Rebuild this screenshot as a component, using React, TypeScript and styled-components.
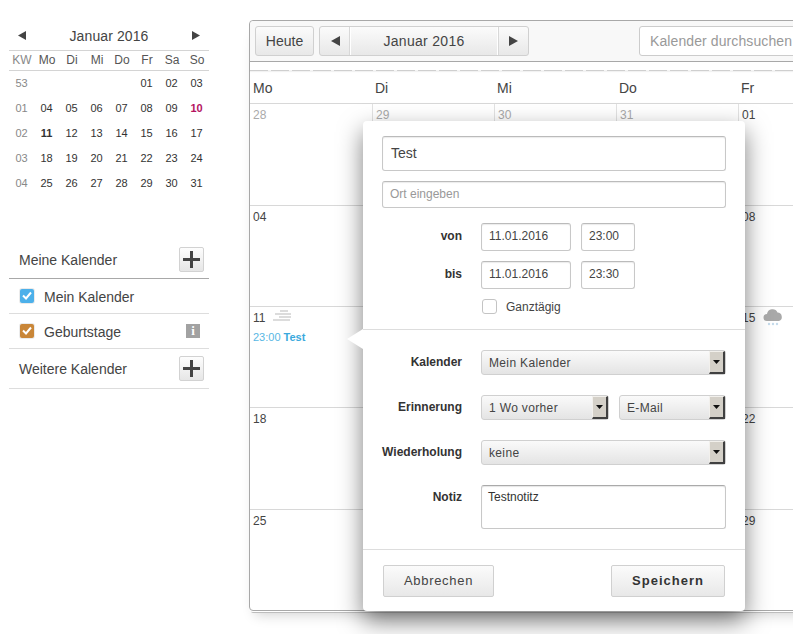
import { Fragment } from "react";
import styled, { createGlobalStyle } from "styled-components";

const GlobalStyle = createGlobalStyle`
  html, body {
    margin: 0;
    padding: 0;
    background: #fff;
  }
  body {
    font-family: "Liberation Sans", Arial, sans-serif;
    color: #333;
  }
`;

const weeks = [
  { kw: "53", days: ["", "", "", "", "01", "02", "03"] },
  { kw: "01", days: ["04", "05", "06", "07", "08", "09", "10"] },
  { kw: "02", days: ["11", "12", "13", "14", "15", "16", "17"] },
  { kw: "03", days: ["18", "19", "20", "21", "22", "23", "24"] },
  { kw: "04", days: ["25", "26", "27", "28", "29", "30", "31"] },
];

const weekdays = ["Mo", "Di", "Mi", "Do", "Fr", "Sa", "So"];

const monthRows = [
  ["28", "29", "30", "31", "01", "02", "03"],
  ["04", "05", "06", "07", "08", "09", "10"],
  ["11", "12", "13", "14", "15", "16", "17"],
  ["18", "19", "20", "21", "22", "23", "24"],
  ["25", "26", "27", "28", "29", "30", "31"],
];

const Page = styled.div`
  position: relative;
  display: flex;
  align-items: flex-start;
  width: 793px;
  height: 634px;
  overflow: hidden;
  background: #fff;
`;

const Sidebar = styled.aside`
  flex: none;
  width: 200px;
  margin: 24px 40px 0 9px;
`;

const MiniTitle = styled.div`
  display: flex;
  align-items: center;
  justify-content: space-between;
  height: 26px;
  padding: 0 9px 3px;
  font-size: 14px;
  letter-spacing: 0.1px;
  color: #444;
  box-sizing: border-box;
`;

const MiniGrid = styled.div`
  display: grid;
  grid-template-columns: repeat(8, 25px);
`;

const MiniHead = styled.div`
  grid-column: 1 / -1;
  display: grid;
  grid-template-columns: repeat(8, 25px);
  height: 19px;
  border-top: 1px solid #d4d4d4;
  border-bottom: 1px solid #d4d4d4;
`;

const MiniHeadCell = styled.div<{ $muted?: boolean }>`
  padding-left: 1px;
  font-size: 12px;
  line-height: 19px;
  text-align: center;
  color: ${(p) => (p.$muted ? "#888" : "#555")};
`;

const MiniCell = styled.div<{ $tone?: "week" | "today" | "selected" }>`
  height: 25px;
  font-size: 11px;
  line-height: 25px;
  text-align: center;
  color: ${(p) =>
    p.$tone === "week" ? "#888" : p.$tone === "today" ? "#b5135f" : "#333"};
  font-weight: ${(p) => (p.$tone === "today" || p.$tone === "selected" ? 700 : 400)};
`;

const CalendarList = styled.div`
  margin-top: 47px;
`;

const ListHeader = styled.div<{ $tall?: boolean; $strong?: boolean }>`
  display: flex;
  align-items: center;
  justify-content: space-between;
  height: ${(p) => (p.$tall ? 38 : 34)}px;
  padding: ${(p) => (p.$tall ? "1px 5px 0 10px" : "0 5px 1px 10px")};
  font-size: 14px;
  color: #444;
  border-bottom: 1px solid ${(p) => (p.$strong ? "#a8a8a8" : "#ddd")};
`;

const ListRow = styled.div`
  display: flex;
  align-items: center;
  height: 33px;
  padding: 1px 9px 0 11px;
  font-size: 14px;
  color: #444;
  border-bottom: 1px solid #ddd;
`;

const ColorCheck = styled.span<{ $color: string }>`
  flex: none;
  display: flex;
  align-items: center;
  justify-content: center;
  width: 14px;
  height: 14px;
  margin: 0 10px 2px 0;
  border-radius: 2px;
  background: ${(p) => p.$color};
  box-shadow: 0 0 0 1px rgba(0, 0, 0, 0.08);
`;

const RowLabel = styled.span`
  flex: 1;
`;

const InfoBadge = styled.span`
  flex: none;
  width: 14px;
  height: 14px;
  margin-bottom: 1px;
  font-family: "Liberation Serif", serif;
  font-size: 13px;
  font-weight: 700;
  line-height: 14px;
  text-align: center;
  color: #fff;
  background: #a2a2a2;
`;

const AddButton = styled.span`
  display: flex;
  align-items: center;
  justify-content: center;
  width: 23px;
  height: 23px;
  margin-bottom: 2px;
  border: 1px solid #d2d2d2;
  border-radius: 2px;
  background: linear-gradient(#fdfdfd, #e6e6e6);
`;

const Main = styled.main`
  position: relative;
  flex: none;
  display: flex;
  flex-direction: column;
  width: 856px;
  height: 589px;
  margin-top: 20px;
  border: 1px solid #a8a8a8;
  border-radius: 4px;
  box-shadow: 0 1px 0 #fff, 0 4px 0 -2px #bdbdbd, 0 10px 12px -6px rgba(0, 0, 0, 0.18);
  background: #fff;
`;

const Toolbar = styled.div`
  flex: none;
  display: flex;
  align-items: center;
  box-sizing: border-box;
  height: 41px;
  padding: 0 5px;
  background: #f8f8f8;
  border-bottom: 1px solid #a8a8a8;
  border-radius: 4px 4px 0 0;
`;

const ToolButton = styled.div`
  box-sizing: border-box;
  width: 59px;
  height: 30px;
  font-size: 14px;
  line-height: 28px;
  text-align: center;
  color: #444;
  border: 1px solid #d0d0d0;
  border-radius: 3px;
  background: linear-gradient(#fbfbfb, #e8e8e8);
`;

const NavGroup = styled.div`
  display: flex;
  height: 30px;
  margin: 0 110px 0 5px;
  box-sizing: border-box;
  border: 1px solid #d0d0d0;
  border-radius: 3px;
  background: linear-gradient(#fbfbfb, #e8e8e8);
`;

const NavArrow = styled.div`
  display: flex;
  align-items: center;
  justify-content: center;
  width: 30px;
`;

const NavLabel = styled.div`
  width: 146px;
  font-size: 14px;
  letter-spacing: 0.3px;
  line-height: 28px;
  text-align: center;
  color: #444;
  border-left: 1px solid #fff;
  border-right: 1px solid #fff;
  box-shadow: -1px 0 0 #d8d8d8, 1px 0 0 #d8d8d8;
`;

const SearchBox = styled.div`
  box-sizing: border-box;
  width: 300px;
  height: 30px;
  padding-left: 10px;
  font-size: 14px;
  letter-spacing: 0.1px;
  line-height: 28px;
  color: #999;
  background: #fff;
  border: 1px solid #ccc;
  border-radius: 3px;
`;

const TornEdge = styled.div`
  flex: none;
  height: 9px;
  box-sizing: border-box;
  background: repeating-linear-gradient(90deg, #cfcfcf 0 18px, #f4f4f4 18px 21px) left bottom / 100% 1px no-repeat;
  box-shadow: 0 1px 1px rgba(0, 0, 0, 0.05);
`;

const DayHeader = styled.div`
  flex: none;
  display: grid;
  grid-template-columns: repeat(7, 122px);
  height: 33px;
  box-sizing: border-box;
  border-bottom: 1px solid #d8d8d8;
`;

const DayName = styled.div`
  padding: 9px 0 0 3px;
  font-size: 14px;
  line-height: 16px;
  color: #444;
`;

const MonthGrid = styled.div`
  flex: 1;
  display: grid;
  grid-template-columns: repeat(7, 122px);
  grid-template-rows: 102px 101px 101px 102px 1fr;
`;

const DayCell = styled.div<{ $first: boolean; $last: boolean }>`
  box-sizing: border-box;
  padding: 4px 0 0 3px;
  border-left: ${(p) => (p.$first ? "none" : "1px solid #e2e2e2")};
  border-bottom: ${(p) => (p.$last ? "none" : "1px solid #d8d8d8")};
`;

const DayTop = styled.div`
  display: flex;
  align-items: center;
  gap: 8px;
  height: 14px;
`;

const DayNumber = styled.span<{ $muted: boolean }>`
  font-size: 12px;
  line-height: 14px;
  color: ${(p) => (p.$muted ? "#aaa" : "#444")};
`;

const WeatherSlot = styled.span`
  display: flex;
  margin-top: -3px;
`;

const EventLine = styled.div`
  margin-top: 5px;
  font-size: 11px;
  line-height: 14px;
  color: #58b7e4;
`;

const EventTitle = styled.b`
  margin-left: 3px;
  color: #3aa9dd;
`;

const Popup = styled.div`
  position: absolute;
  left: 113px;
  top: 100px;
  width: 382px;
  height: 490px;
  background: #fff;
  border-radius: 4px;
  box-shadow: 0 10px 24px rgba(0, 0, 0, 0.5);
`;

const PopupArrow = styled.div`
  position: absolute;
  left: -16px;
  top: 208px;
  width: 0;
  height: 0;
  border-top: 10px solid transparent;
  border-bottom: 10px solid transparent;
  border-right: 16px solid #fff;
`;

const TopSection = styled.section`
  box-sizing: border-box;
  height: 209px;
  padding: 15px 19px 0;
  border-bottom: 1px solid #ddd;
`;

const MiddleSection = styled.section`
  display: flex;
  flex-direction: column;
  gap: 20px;
  box-sizing: border-box;
  height: 220px;
  padding: 20px 19px 0;
  border-bottom: 1px solid #ddd;
`;

const FooterSection = styled.footer`
  display: flex;
  justify-content: space-between;
  padding: 15px 20px 0;
`;

const Field = styled.div<{ $height: number; $width?: number; $size: number; $color?: string }>`
  box-sizing: border-box;
  flex: none;
  width: ${(p) => (p.$width ? `${p.$width}px` : "100%")};
  height: ${(p) => p.$height}px;
  padding: 0 ${(p) => (p.$size > 12 ? 8 : 7)}px;
  font-size: ${(p) => p.$size}px;
  line-height: ${(p) => p.$height - 3}px;
  color: ${(p) => p.$color ?? "#444"};
  background: #fff;
  border: 1px solid #c8c8c8;
  border-top-color: #bbb;
  border-radius: 3px;
  box-shadow: inset 0 1px 1px rgba(0, 0, 0, 0.08);
`;

const TitleGap = styled.div`
  height: 10px;
`;

const FormRow = styled.div<{ $gap?: number }>`
  display: flex;
  align-items: flex-start;
  margin-top: ${(p) => p.$gap ?? 0}px;
`;

const FieldLabel = styled.div<{ $top?: number }>`
  flex: none;
  width: 80px;
  margin-right: 19px;
  padding-top: ${(p) => p.$top ?? 5}px;
  font-size: 12px;
  font-weight: 700;
  line-height: 14px;
  text-align: right;
  white-space: nowrap;
  color: #333;
`;

const TimeGap = styled.div`
  width: 10px;
`;

const CheckRow = styled.div`
  display: flex;
  align-items: center;
  margin: 10px 0 0 99px;
  font-size: 12px;
  color: #444;
`;

const EmptyCheck = styled.span`
  box-sizing: border-box;
  width: 15px;
  height: 15px;
  margin: 0 9px 0 1px;
  background: #fff;
  border: 1px solid #c4c4c4;
  border-radius: 3px;
`;

const Select = styled.div<{ $width: number; $gap?: number }>`
  box-sizing: border-box;
  display: flex;
  justify-content: space-between;
  flex: none;
  width: ${(p) => p.$width}px;
  height: 25px;
  margin-right: ${(p) => p.$gap ?? 0}px;
  padding-left: 7px;
  font-size: 12px;
  letter-spacing: 0.35px;
  line-height: 25px;
  color: #444;
  border: 1px solid #d0d0d0;
  border-radius: 3px;
  background: linear-gradient(#fafafa, #e4e4e4);
`;

const SelectButton = styled.span`
  flex: none;
  display: flex;
  align-items: center;
  justify-content: center;
  box-sizing: border-box;
  width: 16px;
  height: 23px;
  background: #d4d0c8;
  border-top: 1px solid #f2f0ec;
  border-left: 1px solid #f2f0ec;
  border-right: 2px solid #404040;
  border-bottom: 2px solid #404040;
`;

const NoteBox = styled.div`
  box-sizing: border-box;
  width: 245px;
  height: 44px;
  padding: 4px 6px;
  font-size: 12px;
  line-height: 14px;
  color: #333;
  border: 1px solid #c8c8c8;
  border-top-color: #aaa;
  border-radius: 3px;
  box-shadow: inset 0 1px 1px rgba(0, 0, 0, 0.1);
`;

const ActionButton = styled.div<{ $primary?: boolean }>`
  box-sizing: border-box;
  width: ${(p) => (p.$primary ? 114 : 111)}px;
  height: 32px;
  font-size: 13px;
  font-weight: ${(p) => (p.$primary ? 700 : 400)};
  letter-spacing: ${(p) => (p.$primary ? 1 : 0.7)}px;
  line-height: 30px;
  text-align: center;
  color: ${(p) => (p.$primary ? "#333" : "#444")};
  border: 1px solid #d0d0d0;
  border-radius: 2px;
  background: linear-gradient(#fbfbfb, #e8e8e8);
`;

function Triangle({ left, size = 9, color = "#444" }: { left?: boolean; size?: number; color?: string }) {
  return (
    <svg width={size} height={size + 1} viewBox="0 0 9 10">
      <path d={left ? "M0 5 L9 0 V10 Z" : "M9 5 L0 0 V10 Z"} fill={color} />
    </svg>
  );
}

function Plus() {
  return (
    <svg width="17" height="17" viewBox="0 0 17 17">
      <path d="M7 0h3v7h7v3h-7v7H7v-7H0V7h7z" fill="#444" />
    </svg>
  );
}

function Check() {
  return (
    <svg width="10" height="9" viewBox="0 0 10 9">
      <path d="M1 4.5 L4 7.5 L9 1.5" fill="none" stroke="#fff" strokeWidth="2" />
    </svg>
  );
}

function SelectArrow() {
  return (
    <svg width="7" height="4" viewBox="0 0 7 4">
      <path d="M0 0H7L3.5 4Z" fill="#111" />
    </svg>
  );
}

function HazeIcon() {
  return (
    <svg width="19" height="13" viewBox="0 0 19 13">
      <g fill="#dcdcdc">
        <rect x="7" y="0" width="8" height="2" />
        <rect x="2" y="3" width="16" height="2" />
        <rect x="6" y="6" width="12" height="2" />
        <rect x="0" y="9" width="17" height="2" />
      </g>
    </svg>
  );
}

function RainCloudIcon() {
  return (
    <svg width="20" height="18" viewBox="0 0 20 18">
      <path d="M4 13a3.5 3.5 0 0 1 0-7 5.5 5.5 0 0 1 10.5-1.5A4.4 4.4 0 0 1 16 13z" fill="#a9a9a9" />
      <g fill="#c5dcec">
        <circle cx="6" cy="16" r="1.2" />
        <circle cx="10" cy="16" r="1.2" />
        <circle cx="14" cy="16" r="1.2" />
      </g>
    </svg>
  );
}

export default function App() {
  return (
    <Page>
      <GlobalStyle />
      <Sidebar>
        <MiniTitle>
          <Triangle left size={8} />
          <span>Januar 2016</span>
          <Triangle size={8} />
        </MiniTitle>
        <MiniGrid>
          <MiniHead>
            <MiniHeadCell $muted>KW</MiniHeadCell>
            {weekdays.map((day) => (
              <MiniHeadCell key={day}>{day}</MiniHeadCell>
            ))}
          </MiniHead>
          {weeks.map((week) => (
            <Fragment key={week.kw}>
              <MiniCell $tone="week">{week.kw}</MiniCell>
              {week.days.map((day, index) => (
                <MiniCell
                  key={index}
                  $tone={day === "10" ? "today" : day === "11" ? "selected" : undefined}
                >
                  {day}
                </MiniCell>
              ))}
            </Fragment>
          ))}
        </MiniGrid>
        <CalendarList>
          <ListHeader $strong>
            Meine Kalender
            <AddButton>
              <Plus />
            </AddButton>
          </ListHeader>
          <ListRow>
            <ColorCheck $color="#4cb0ea">
              <Check />
            </ColorCheck>
            <RowLabel>Mein Kalender</RowLabel>
          </ListRow>
          <ListRow>
            <ColorCheck $color="#c98638">
              <Check />
            </ColorCheck>
            <RowLabel>Geburtstage</RowLabel>
            <InfoBadge>i</InfoBadge>
          </ListRow>
          <ListHeader $tall>
            Weitere Kalender
            <AddButton>
              <Plus />
            </AddButton>
          </ListHeader>
        </CalendarList>
      </Sidebar>

      <Main>
        <Toolbar>
          <ToolButton>Heute</ToolButton>
          <NavGroup>
            <NavArrow>
              <Triangle left />
            </NavArrow>
            <NavLabel>Januar 2016</NavLabel>
            <NavArrow>
              <Triangle />
            </NavArrow>
          </NavGroup>
          <SearchBox>Kalender durchsuchen</SearchBox>
        </Toolbar>
        <TornEdge />
        <DayHeader>
          {weekdays.map((day) => (
            <DayName key={day}>{day}</DayName>
          ))}
        </DayHeader>
        <MonthGrid>
          {monthRows.map((row, rowIndex) =>
            row.map((day, colIndex) => (
              <DayCell key={`${rowIndex}-${colIndex}`} $first={colIndex === 0} $last={rowIndex === 4}>
                <DayTop>
                  <DayNumber $muted={rowIndex === 0 && colIndex < 4}>{day}</DayNumber>
                  {rowIndex === 2 && colIndex === 0 && (
                    <WeatherSlot>
                      <HazeIcon />
                    </WeatherSlot>
                  )}
                  {rowIndex === 2 && colIndex === 4 && (
                    <WeatherSlot>
                      <RainCloudIcon />
                    </WeatherSlot>
                  )}
                </DayTop>
                {rowIndex === 2 && colIndex === 0 && (
                  <EventLine>
                    23:00
                    <EventTitle>Test</EventTitle>
                  </EventLine>
                )}
              </DayCell>
            ))
          )}
        </MonthGrid>

        <Popup>
          <PopupArrow />
          <TopSection>
            <Field $height={35} $size={14}>
              Test
            </Field>
            <TitleGap />
            <Field $height={27} $size={12} $color="#999">
              Ort eingeben
            </Field>
            <FormRow $gap={15}>
              <FieldLabel $top={6}>von</FieldLabel>
              <Field $height={28} $width={90} $size={12}>
                11.01.2016
              </Field>
              <TimeGap />
              <Field $height={28} $width={54} $size={12}>
                23:00
              </Field>
            </FormRow>
            <FormRow $gap={10}>
              <FieldLabel $top={6}>bis</FieldLabel>
              <Field $height={28} $width={90} $size={12}>
                11.01.2016
              </Field>
              <TimeGap />
              <Field $height={28} $width={54} $size={12}>
                23:30
              </Field>
            </FormRow>
            <CheckRow>
              <EmptyCheck />
              Ganztägig
            </CheckRow>
          </TopSection>

          <MiddleSection>
            <FormRow>
              <FieldLabel>Kalender</FieldLabel>
              <Select $width={245}>
                Mein Kalender
                <SelectButton>
                  <SelectArrow />
                </SelectButton>
              </Select>
            </FormRow>
            <FormRow>
              <FieldLabel>Erinnerung</FieldLabel>
              <Select $width={128} $gap={10}>
                1 Wo vorher
                <SelectButton>
                  <SelectArrow />
                </SelectButton>
              </Select>
              <Select $width={107}>
                E-Mail
                <SelectButton>
                  <SelectArrow />
                </SelectButton>
              </Select>
            </FormRow>
            <FormRow>
              <FieldLabel>Wiederholung</FieldLabel>
              <Select $width={245}>
                keine
                <SelectButton>
                  <SelectArrow />
                </SelectButton>
              </Select>
            </FormRow>
            <FormRow>
              <FieldLabel>Notiz</FieldLabel>
              <NoteBox>Testnotitz</NoteBox>
            </FormRow>
          </MiddleSection>

          <FooterSection>
            <ActionButton>Abbrechen</ActionButton>
            <ActionButton $primary>Speichern</ActionButton>
          </FooterSection>
        </Popup>
      </Main>
    </Page>
  );
}
